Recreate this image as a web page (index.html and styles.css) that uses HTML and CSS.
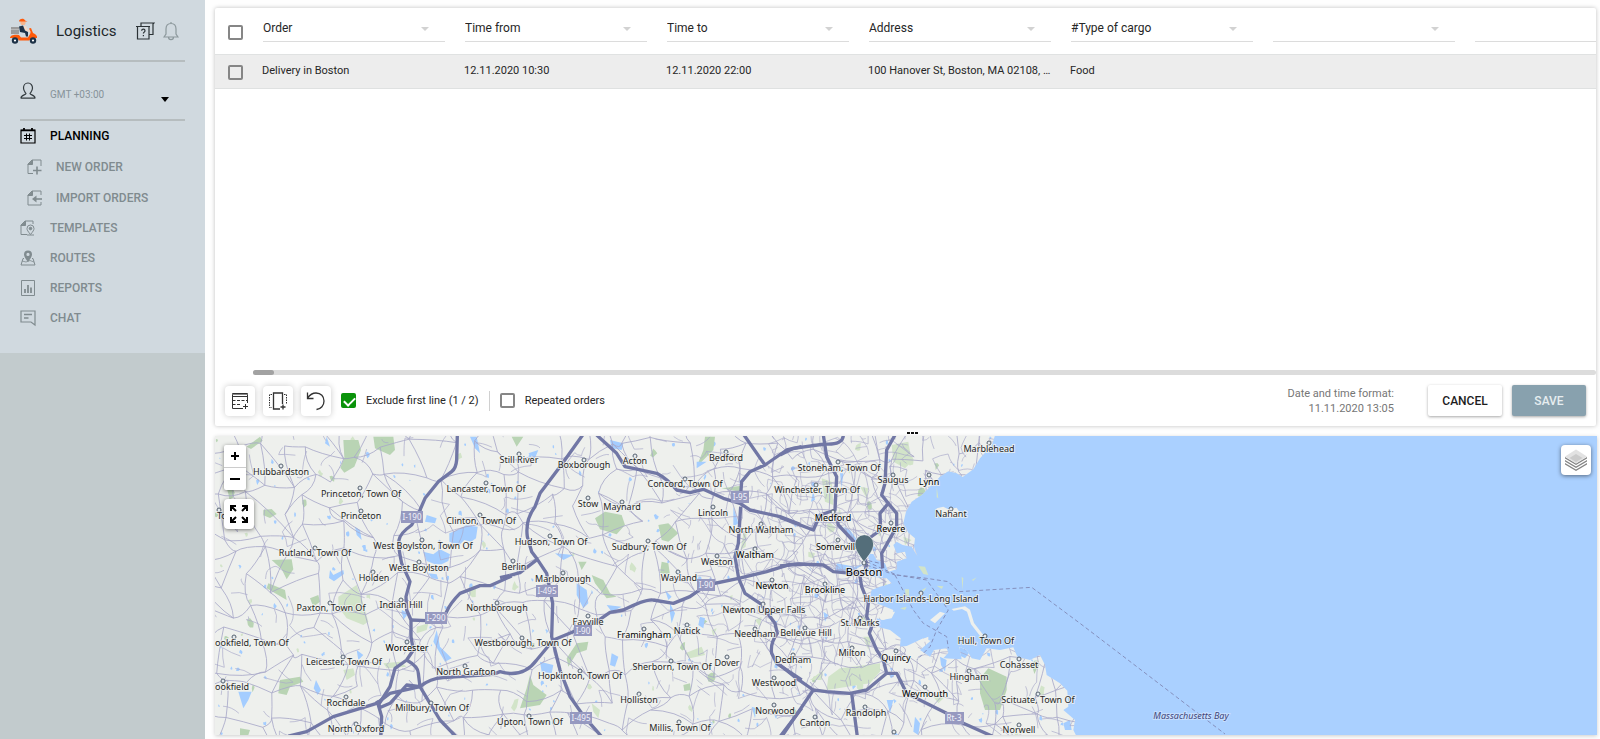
FILE: index.html
```html
<!DOCTYPE html>
<html lang="en">
<head>
<meta charset="utf-8">
<title>Logistics</title>
<link rel="stylesheet" href="styles.css">
</head>
<body>
<div class="app">
  <aside class="sidebar">
    <div class="sidebar-top">
      <header class="brand">
        <svg class="logo" viewBox="0 0 28 27" aria-hidden="true">
          <rect x="1" y="9" width="8" height="7" fill="#9b9b9b"/>
          <path d="M1 11.500h8" stroke="#b9b9b9"/>
          <path d="M13 8l3 0 1.500 3 3.500 2-1 1.500-4.500-1.500z" fill="#f3d9c6"/>
          <path d="M9 8.500l4-1 2 5 3 1.500 0 4.500-2 0-1-3.500-5-1z" fill="#1d3247"/>
          <circle cx="13" cy="4.500" r="2.600" fill="#f5b58e"/>
          <path d="M9 3.500C9 0 14.500 0 15 2.500l2.500 1H9z" fill="#ff5a0a"/>
          <path d="M0 20c0-3 5-4 9-3l2 2.500h7c1-2 3-4 2.500-6l-1.500-3 2-.500 2 5c3 1 4.500 3 4 5h-5l-3 2.500H9L7 20z" fill="#ff5a0a"/>
          <circle cx="5" cy="22.500" r="3.200" fill="#1d3247"/><circle cx="5" cy="22.500" r="1.100" fill="#fff"/>
          <circle cx="23" cy="22.500" r="3.200" fill="#1d3247"/><circle cx="23" cy="22.500" r="1.100" fill="#fff"/>
        </svg>
        <h1 class="brand-name">Logistics</h1>
        <button class="icon-button" type="button" aria-label="Help">
          <svg width="20" height="20" viewBox="0 0 20 20" fill="none" stroke="#2b3236" stroke-width="1.200">
            <path d="M1 5.500h14M2.500 5.500v12.500h11.500V5.500M6 5.500V2h13l-1 1v10.500h-4"/>
            <path d="M6.700 9.800c0-2.200 3.300-2.200 3.300 0 0 1.400-1.600 1.300-1.600 2.700M8.400 14v1.200"/>
          </svg>
        </button>
        <button class="icon-button" type="button" aria-label="Notifications">
          <svg width="16" height="20" viewBox="0 0 16 20" fill="none" stroke="#8c989c" stroke-width="1.200">
            <path d="M8 2.500c-3.500 0-5 2.500-5 5.500v5l-2 3h14l-2-3V8c0-3-1.500-5.500-5-5.500zM8 2.500V1M5.500 16c0 3.500 5 3.500 5 0"/>
          </svg>
        </button>
      </header>
      <div class="account">
        <svg width="16" height="18" viewBox="0 0 16 18" fill="none" stroke="#343c40" stroke-width="1.200">
          <path d="M8 1C5 1 3.500 3.500 3.500 6c0 3 1.500 4 2.500 5.500C6 13 1 13 1 16h14c0-3-5-3-5-4.500C11 10 12.500 9 12.500 6 12.500 3.500 11 1 8 1zM1 16.200h14"/>
        </svg>
        <label class="zone-label" for="zone">GMT +03:00</label>
        <button class="zone-toggle" id="zone" type="button"></button>
      </div>
      <nav class="menu">
        <a class="item current" href="#planning">
          <svg width="16" height="18" viewBox="0 0 16 18" fill="none" stroke="currentColor">
            <path d="M1 3h14v13H1z" stroke-width="1.200"/><path d="M1 3.500h14" stroke-width="1.500"/><path d="M4 1v3M12 1v3" stroke-width="1.800"/>
            <path d="M6.500 6.500v7M9.500 6.500v7M4 8.500h8M4 11.500h8"/>
          </svg>
          <span>PLANNING</span></a>
        <a class="item sub" href="#new">
          <svg width="16" height="18" viewBox="0 0 16 18" fill="none" stroke="currentColor">
            <path d="M6 15.500H1V6l4-4h9v5M14 7v1" /><path d="M1 6.500h4.500V2z" fill="currentColor"/><path d="M10 8.500v8M6 12.500h8.500" stroke-width="1.600"/>
          </svg>
          <span>NEW ORDER</span></a>
        <a class="item sub" href="#import">
          <svg width="16" height="18" viewBox="0 0 16 18" fill="none" stroke="currentColor">
            <path d="M14 13v3H1V6l4-4h9v4"/><path d="M1 6.500h4.500V2z" fill="currentColor"/><path d="M15 10H8" stroke-width="1.600"/><path d="M9.500 6.500v7L5 10z" fill="currentColor" stroke="none"/>
          </svg>
          <span>IMPORT ORDERS</span></a>
        <a class="item" href="#templates">
          <svg width="16" height="18" viewBox="0 0 16 18" fill="none" stroke="currentColor">
            <path d="M7 15.500H1V6l4-4h8v3"/><path d="M1 6.500h4.500V2z" fill="currentColor"/><path d="M10.500 15.500C8 12.500 7 11 7 9.500a3.500 3.500 0 0 1 7 0c0 1.500-1 3-3.500 6zM7 16h7"/><circle cx="10.500" cy="9.500" r="1.300" fill="currentColor"/>
          </svg>
          <span>TEMPLATES</span></a>
        <a class="item" href="#routes">
          <svg width="16" height="18" viewBox="0 0 16 18" fill="none" stroke="currentColor">
            <path d="M4 9.500H3L1 16h14l-2-6.500h-1"/><path d="M2 12l4 1 4-1.500 4 1.500" stroke-width=".800"/>
            <path d="M8 13C5.500 9.500 4 7.500 4 5.500a4 4 0 0 1 8 0c0 2-1.500 4-4 7.500zM8 3.800a1.600 1.600 0 1 0 0 3.200 1.600 1.600 0 0 0 0-3.200z" fill="currentColor" fill-rule="evenodd" stroke="none"/>
          </svg>
          <span>ROUTES</span></a>
        <a class="item" href="#reports">
          <svg width="16" height="18" viewBox="0 0 16 18" fill="none" stroke="currentColor">
            <path d="M1.500 1.500h13v15h-13z"/><path d="M5 10v4M8 6v8M11 8.500V14" stroke-width="1.800"/>
          </svg>
          <span>REPORTS</span></a>
        <a class="item" href="#chat">
          <svg width="16" height="18" viewBox="0 0 16 18" fill="none" stroke="currentColor" stroke-width="1.200">
            <path d="M1 2h14v14l-4-3H1z"/><path d="M4 5.500h8M4 9h4.500" stroke-width="1.400"/>
          </svg>
          <span>CHAT</span></a>
      </nav>
    </div>
  </aside>

  <main class="main">
    <section class="panel">
      <div class="table-wrap">
        <table class="orders">
          <colgroup><col class="col-check"><col><col><col><col><col><col><col></colgroup>
          <thead>
            <tr>
              <th><input type="checkbox" class="check" aria-label="Select all"></th>
              <th><div class="field"><select aria-label="Column 1"><option>Order</option></select></div></th>
              <th><div class="field"><select aria-label="Column 2"><option>Time from</option></select></div></th>
              <th><div class="field"><select aria-label="Column 3"><option>Time to</option></select></div></th>
              <th><div class="field"><select aria-label="Column 4"><option>Address</option></select></div></th>
              <th><div class="field"><select aria-label="Column 5"><option>#Type of cargo</option></select></div></th>
              <th><div class="field"><select aria-label="Column 6"><option></option></select></div></th>
              <th><div class="field"><select aria-label="Column 7"><option></option></select></div></th>
            </tr>
          </thead>
          <tbody>
            <tr>
              <td><input type="checkbox" class="check" aria-label="Select order"></td>
              <td>Delivery in Boston</td>
              <td>12.11.2020 10:30</td>
              <td>12.11.2020 22:00</td>
              <td>100 Hanover St, Boston, MA 02108, …</td>
              <td>Food</td>
              <td></td>
              <td></td>
            </tr>
          </tbody>
        </table>
      </div>
      <div class="scroll-track"><div class="scroll-thumb"></div></div>
      <div class="toolbar">
        <div class="tools">
          <button class="tool" type="button" aria-label="Add row">
            <svg width="18" height="18" viewBox="0 0 18 18" fill="none" stroke="#333">
              <path d="M16.500 11V1.500h-15v15H12M1.500 4.500h15"/><path d="M1.500 2.500h15" stroke="#888"/><path d="M1.500 8.500h15M1.500 12.500h9" stroke-dasharray="3 1.500"/><path d="M14.500 12v5M12 14.500h5"/>
            </svg>
          </button>
          <button class="tool" type="button" aria-label="Add column">
            <svg width="20" height="20" viewBox="0 0 20 20" fill="none" stroke="#333">
              <path d="M14.500 13V2h-9v16H12" stroke-width="1.300"/><path d="M4 3.500H1.500v13H4M16 3.500h2.500v10" stroke-dasharray="1.500 1"/><path d="M15 13.500v5M12.500 16h5" stroke-width="1.300"/>
            </svg>
          </button>
          <button class="tool" type="button" aria-label="Undo">
            <svg width="20" height="20" viewBox="0 0 20 20" fill="none" stroke="#333" stroke-width="1.300">
              <path d="M1.500 1.500v6h6M1.500 7C4 3.500 7 2 10 2c5 0 8 3.500 8 8s-3 8-7.500 8.500"/>
            </svg>
          </button>
        </div>
        <label class="option"><input type="checkbox" class="check" checked>Exclude first line (1 / 2)</label>
        <span class="divider"></span>
        <label class="option"><input type="checkbox" class="check">Repeated orders</label>
        <p class="format">Date and time format:<br>11.11.2020 13:05</p>
        <button class="action" type="button">CANCEL</button>
        <button class="action save" type="button">SAVE</button>
      </div>
    </section>

    <div class="splitter" role="separator"><i></i><i></i><i></i></div>

    <section class="map">
      <svg class="map-canvas" viewBox="0 0 1382 299" preserveAspectRatio="xMinYMid slice" role="img" aria-label="Map of Boston area">
        <defs>
          <clipPath id="land">
            <path transform="translate(565 -6) scale(.33333)" d="M-1800 0H650L636 45 600 85 580 118 548 141 530 130 505 124 480 140 450 170 425 195 395 215 378 245 370 280 385 308 405 325 402 350 412 378 395 350 368 345 350 335 340 345 350 370 375 365 380 385 350 395 350 418 325 425 315 400 290 390 280 372 262 372 270 400 262 425 275 440 320 445 335 460 300 470 275 480 268 505 290 520 340 540 335 560 310 570 290 565 292 590 330 600 362 625 360 650 380 648 430 625 452 632 420 660 450 680 462 660 500 655 505 668 490 685 545 688 538 650 560 660 575 685 600 690 620 655 660 660 700 652 712 680 750 690 780 675 795 705 800 735 840 760 862 782 865 830 850 840 885 870 880 900 895 930H-1800z"/>
          </clipPath>
        </defs>
        <rect width="1382" height="299" fill="#aad0ff"/>
        <g clip-path="url(#land)">
          <rect width="900" height="299" fill="#eef0ed"/>
          <g id="terrain"></g>
          <g transform="translate(-5 -6) scale(.33333)">
            <path class="wood" d="M400 30l45 0 8 30-20 50-30 18-12-15 12-30zM490 20h60l5 40-15 15-45-20zM110 50l40-30 8 12-35 25zM160 240l25-3 15 15-20 12-20-8zM185 390l60-2 5 30-20 30-15-30zM175 460l50 20 5 30-60-35zM300 505l25-10 5 20-20 15zM210 750l60-10 10 15-40 15-10 25-25-5zM90 895l30 5-5 15H90z"/>
            <path class="park" d="M385 500l55-35 15 40 20 70-15 10-50-20-25-35zM400 720l30-5 5 20-25 15zM520 700l50 -5 20 15-60 5zM620 590l35-10-5 20-30 10z"/>
            <path class="water" d="M718 310l30-12 20-12 35 4-5 35-15 10-20-5-15 15-30-10zM640 365l30 8 20-15 30 15-5 20-20 10-20 0-25-10zM655 430l25 3 5 15-20-3zM85 785l40 0-10 25-15 25zM360 420l10 15 30-15 2 12-30 22-15-10zM318 750l15 30-10 15-12-20zM680 600l10 50 35 35-20 10-35-60zM435 290l15 10 5 30-15-15zM650 255l30 10-5 15-30-5zM350 20l10 30-15-10zM575 540l20 10-15 20zM440 660l20 15-15 15zM780 20h20l10 50-15-15z"/>
          </g>
          <g transform="translate(285 -6) scale(.33333)">
            <path class="wood" d="M285 265l30-20 50 10 10 30-25 28-50-15zM275 435l35 15 20 40 20 10-30 5-35-45zM475 285l30-5 30 30-30 25-20-5zM485 395l20 5 5 35-30-5zM230 640l35-5-5 25-30 10-25 40-5-25zM90 735l10 30 40 30-20 30-60 10 20-60zM550 765l20-5 3 20-20 3zM615 20h30l-5 40-50 50 20-50zM665 175l60-8v20zM35 20h35l-20 30zM235 395l25 0-15 25z"/>
            <path class="park" d="M555 670l50-20 10 25-45 10zM275 820l25 20-5 25-15-20zM765 570l20-10-5 30zM730 310l10-10-3 50-15 10zM635 600l15-5-10 25z"/>
            <path class="water" d="M120 695l40 10-5 25-30-5zM230 460l30 20 5 40-15 15-20-40zM510 520l15 30-10 30-5-30zM165 370l55 5-30 15zM590 95l30 0-30 20zM85 70l30-10-10 25zM330 30l40 10-5 20-30-5zM600 560l15 5-5 30-15-10zM700 230l15 50-15 10zM335 670l20 10-10 30-15-5zM755 830l15 5-5 30zM495 480l20 20-10 10zM320 525l45 5-30 15z"/>
          </g>
          <g transform="translate(565 -6) scale(.33333)">
            <path class="wood" d="M600 745l25-30 55 25 0 40-20 60-45 0-15-50z"/>
            <path class="park" d="M335 45l50-10 10 60-20 20-35-20zM125 145l30 10 5 70-25-10zM90 750l40-30-5 30zM180 715l120-15 0 25-30 35-130 20 5-40zM85 365l20 5-5 15-15-5zM240 170l25 5-5 30zM370 320l25 10-20 15zM460 800l35 0-20 20zM250 620l25 0-10 40z"/>
            <path class="water" d="M170 400l55 10 30-10-30 20-60 5zM190 290l20 10 25 35-10 5zM180 130l10 0-5 45zM320 810l20 0-10 40zM405 860l15 20-5 35-15-10zM480 680l20 10-5 35-12-20zM130 545l15 10-10 20zM540 650l30 15-15 20-20-10zM100 180l5 30-12 5zM850 880l20-10 5 30-20 0z"/>
          </g>
          <g id="roads" fill="none" stroke="#a9a9c9" stroke-opacity=".85"></g>
        </g>
        <g transform="translate(565 -6) scale(.33333)">
          <path class="shore" d="M470 235l20-5 15 8 25-5 15 25-25 5-25-10-25 2zM515 537l40-8 15 10 12 40 28 36-8 5-29-37-12-38-15-8-25 5zM450 570l30-25 15 5-30 30zM320 545l25 0-10 20-30 5-15-15zM415 632l30-12 0 10-25 12zM395 655l20-4-8 10z"/>
          <path class="park" d="M415 408l20 2 10 25-15-3zM375 478l12 0 0 20-10 0zM425 480l15-8-8 12zM470 467l20 2-5 8zM545 440l5 5-3 35zM360 535l20-5-5 10zM470 170l5 35-5-3zM575 450l15-8-10 10z"/>
          <path class="ferry" d="M260 395L350 435 440 445 505 455 535 485 755 472 900 580 1335 912M345 435L400 540 430 580 500 620 505 655M350 435L440 450 505 540 470 600 450 650 410 690M260 405L345 435M265 392L300 400"/>
        </g>
        <g class="highways">
          <g transform="translate(-5 -6) scale(.33333)">
            <path d="M742 15L740 90Q738 115 725 125L685 155 645 205 630 240 605 285Q570 310 567 330T575 400L600 455 588 500 590 540 603 570V620L610 660 590 690 555 715 540 770 505 825 515 860 512 920"/>
            <path d="M603 570L650 572Q700 570 710 545T750 490L810 467 840 467 905 438"/>
            <path d="M590 690Q625 710 625 730L630 770 660 820 690 870 738 920M235 918L290 905 370 860 500 820 540 790 630 770Q660 745 700 743L850 733M505 835L540 820 590 765 630 770"/>
            <path d="M500 812l10 20" stroke-width="20"/>
          </g>
          <g transform="translate(285 -6) scale(.33333)">
            <path d="M30 436L60 428 112 388M-20 733L0 725Q70 745 110 690L160 630 220 605 290 575 330 547 370 540Q440 505 460 510L520 520 570 500 620 465 716 445 800 425 870 403 900 403"/>
            <path d="M30 436L0 443"/>
            <path d="M248 15L180 110 120 190 105 230Q75 270 82 320L95 365 112 388 140 430 158 520 155 620 180 720 210 800 245 850 270 880 305 920"/>
            <path d="M290 15L350 70 375 110 470 130Q500 145 530 180L570 188 610 178 670 205 720 220 750 240 840 260 900 283M720 220L725 155 750 125 795 105 860 60 905 50M732 15L795 105M722 230L715 340 705 380 716 445 735 490 780 520 825 580 832 610Q810 640 815 670L830 700 905 750M840 920L905 835"/>
          </g>
          <g transform="translate(565 -6) scale(.33333)">
            <path d="M0 75L40 55 135 42Q190 45 190 15M130 15L140 80 170 140 165 240 120 255 100 300 0 262M168 250L175 285 245 360 260 400M345 15L320 60 315 160 305 195 325 220 300 250 302 300 260 330M325 220L350 250 350 290 305 370 308 415"/>
            <path d="M0 408L60 402 130 405 160 425 215 430 255 425 260 400M255 425L240 440 245 470 265 520 260 560 275 590 268 610 290 660 310 690 320 730M0 705L50 745 100 780 140 785 210 790 260 780 320 730 350 730 380 790 430 815 500 850 550 880 640 920M215 790L232 920M100 780L5 920"/>
          </g>
        </g>
        <g class="towns">
          <circle cx="66" cy="30" r="2"/><circle cx="145" cy="52" r="2"/><circle cx="146" cy="75" r="2"/><circle cx="271" cy="47" r="2"/><circle cx="265" cy="79" r="2"/><circle cx="4" cy="74" r="2"/><circle cx="207" cy="104" r="2"/><circle cx="204" cy="126" r="2"/><circle cx="100" cy="112" r="2"/><circle cx="158" cy="136" r="2"/><circle cx="115" cy="167" r="2"/><circle cx="186" cy="164" r="2"/><circle cx="19" cy="201" r="2"/><circle cx="192" cy="206" r="2"/><circle cx="128" cy="221" r="2"/><circle cx="250" cy="230" r="2"/><circle cx="8" cy="245" r="2"/><circle cx="131" cy="261" r="2"/><circle cx="216" cy="267" r="2"/><circle cx="141" cy="288" r="2"/><circle cx="282" cy="167" r="2"/><circle cx="307" cy="202" r="2"/><circle cx="304" cy="18" r="2"/><circle cx="298" cy="125" r="2"/><circle cx="314" cy="280" r="2"/>
          <circle cx="369" cy="24" r="2"/><circle cx="420" cy="20" r="2"/><circle cx="470" cy="43" r="2"/><circle cx="511" cy="16" r="2"/><circle cx="373" cy="62" r="2"/><circle cx="407" cy="66" r="2"/><circle cx="498" cy="71" r="2"/><circle cx="546" cy="88" r="2"/><circle cx="335" cy="100" r="2"/><circle cx="433" cy="105" r="2"/><circle cx="502" cy="120" r="2"/><circle cx="540" cy="113" r="2"/><circle cx="348" cy="137" r="2"/><circle cx="463" cy="136" r="2"/><circle cx="557" cy="144" r="2"/><circle cx="548" cy="168" r="2"/><circle cx="373" cy="180" r="2"/><circle cx="429" cy="193" r="2"/><circle cx="472" cy="189" r="2"/><circle cx="540" cy="193" r="2"/><circle cx="590" cy="192" r="2"/><circle cx="456" cy="225" r="2"/><circle cx="512" cy="221" r="2"/><circle cx="365" cy="235" r="2"/><circle cx="578" cy="219" r="2"/><circle cx="559" cy="242" r="2"/><circle cx="424" cy="258" r="2"/><circle cx="559" cy="269" r="2"/><circle cx="464" cy="286" r="2"/>
          <circle cx="774" cy="7" r="2"/><circle cx="623" cy="26" r="2"/><circle cx="601" cy="49" r="2"/><circle cx="678" cy="39" r="2"/><circle cx="714" cy="39" r="2"/><circle cx="736" cy="73" r="2"/><circle cx="618" cy="76" r="2"/><circle cx="676" cy="87" r="2"/><circle cx="623" cy="104" r="2"/><circle cx="649" cy="127" r="2"/><circle cx="610" cy="148" r="2"/><circle cx="706" cy="157" r="2"/><circle cx="645" cy="182" r="2"/><circle cx="770" cy="200" r="2"/><circle cx="637" cy="212" r="2"/><circle cx="681" cy="215" r="2"/><circle cx="804" cy="223" r="2"/><circle cx="754" cy="235" r="2"/><circle cx="710" cy="251" r="2"/><circle cx="823" cy="258" r="2"/><circle cx="650" cy="271" r="2"/><circle cx="600" cy="281" r="2"/><circle cx="804" cy="289" r="2"/><circle cx="679" cy="296" r="2"/>
        </g>
        <g class="places">
          <text x="66" y="39">Hubbardston</text><text x="146" y="61">Princeton, Town Of</text><text x="146" y="83">Princeton</text><text x="271" y="56">Lancaster, Town Of</text><text x="266" y="88">Clinton, Town Of</text><text class="edge" x="2" y="83">Town</text><text x="208" y="113">West Boylston, Town Of</text><text x="204" y="135">West Boylston</text><text x="100" y="120">Rutland, Town Of</text><text x="159" y="145">Holden</text><text x="116" y="175">Paxton, Town Of</text><text x="186" y="172">Indian Hill</text><text class="edge" x="0" y="210">ookfield, Town Of</text><text class="city" x="192" y="215">Worcester</text><text x="129" y="229">Leicester, Town Of</text><text x="251" y="239">North Grafton</text><text class="edge" x="0" y="254">ookfield</text><text x="131" y="270">Rochdale</text><text x="217" y="275">Millbury, Town Of</text><text x="141" y="296">North Oxford</text><text x="282" y="175">Northborough</text><text x="308" y="210">Westborough, Town Of</text><text x="304" y="27">Still River</text><text x="299" y="134">Berlin</text><text x="315" y="289">Upton, Town Of</text>
          <text x="369" y="32">Boxborough</text><text x="420" y="28">Acton</text><text x="470" y="51">Concord, Town Of</text><text x="511" y="25">Bedford</text><text x="373" y="71">Stow</text><text x="407" y="74">Maynard</text><text x="498" y="80">Lincoln</text><text x="546" y="97">North Waltham</text><text x="336" y="109">Hudson, Town Of</text><text x="434" y="114">Sudbury, Town Of</text><text x="502" y="129">Weston</text><text class="city" x="540" y="122">Waltham</text><text x="348" y="146">Marlborough</text><text x="464" y="145">Wayland</text><text class="city" x="557" y="153">Newton</text><text x="549" y="177">Newton Upper Falls</text><text x="373" y="189">Fayville</text><text class="city" x="429" y="202">Framingham</text><text x="472" y="198">Natick</text><text x="540" y="201">Needham</text><text x="591" y="200">Bellevue Hill</text><text x="457" y="234">Sherborn, Town Of</text><text x="512" y="230">Dover</text><text x="365" y="243">Hopkinton, Town Of</text><text x="578" y="227">Dedham</text><text x="559" y="250">Westwood</text><text x="424" y="267">Holliston</text><text x="560" y="278">Norwood</text><text x="465" y="295">Millis, Town Of</text>
          <text x="774" y="16">Marblehead</text><text x="624" y="35">Stoneham, Town Of</text><text x="602" y="57">Winchester, Town Of</text><text x="678" y="47">Saugus</text><text class="city" x="714" y="49">Lynn</text><text x="736" y="81">Nahant</text><text class="city" x="618" y="85">Medford</text><text class="city" x="676" y="96">Revere</text><text class="city" x="623" y="114">Somerville</text><text class="city capital" x="649" y="140">Boston</text><text class="city" x="610" y="157">Brookline</text><text x="706" y="166">Harbor Islands-Long Island</text><text x="645" y="190">St. Marks</text><text x="771" y="208">Hull, Town Of</text><text x="637" y="220">Milton</text><text class="city" x="681" y="225">Quincy</text><text x="804" y="232">Cohasset</text><text x="754" y="244">Hingham</text><text class="city" x="710" y="261">Weymouth</text><text x="823" y="267">Scituate, Town Of</text><text x="651" y="280">Randolph</text><text x="600" y="290">Canton</text><text x="804" y="297">Norwell</text><text class="bay" x="976" y="283">Massachusetts Bay</text>
        </g>
        <g class="shields">
          <rect x="186" y="75" width="22" height="12"/><text x="197" y="84">I-190</text>
          <rect x="210" y="176" width="22" height="12"/><text x="221" y="185">I-290</text>
          <rect x="516" y="55" width="18" height="12"/><text x="525" y="64">I-95</text>
          <rect x="482" y="143" width="18" height="12"/><text x="491" y="152">I-90</text>
          <rect x="321" y="149" width="22" height="12"/><text x="332" y="158">I-495</text>
          <rect x="359" y="189" width="18" height="11"/><text x="368" y="198">I-90</text>
          <rect x="355" y="276" width="22" height="12"/><text x="366" y="285">I-495</text>
          <rect x="730" y="276" width="19" height="12"/><text x="739" y="285">Rt-3</text>
        </g>
        <path d="M649 126C644 119 640 114 640 108a9.300 9.300 0 0 1 18.600 0c0 6-4.600 11-9.600 18z" fill="#546e7a" stroke="#fff" stroke-width=".600"/>
      </svg>
      <div class="map-left">
        <div class="zoom">
          <button type="button" aria-label="Zoom in"><svg width="10" height="10" viewBox="0 0 10 10" stroke="#000" stroke-width="2"><path d="M5 1v8M1 5h8"/></svg></button>
          <button type="button" aria-label="Zoom out"><svg width="10" height="10" viewBox="0 0 10 10" stroke="#000" stroke-width="2"><path d="M0 5h10"/></svg></button>
        </div>
        <button class="expand" type="button" aria-label="Full screen">
          <svg width="20" height="20" viewBox="0 0 20 20" fill="none" stroke="#000" stroke-width="2">
            <path d="M2 7V2h5M2 2l5 5M13 2h5v5M18 2l-5 5M2 13v5h5M2 18l5-5M18 13v5h-5M18 18l-5-5"/>
          </svg>
        </button>
      </div>
      <button class="layers" type="button" aria-label="Layers">
        <svg width="24" height="24" viewBox="0 0 24 24">
          <path d="M1 15l11 6.500L23 15v1.500L12 23 1 16.500z" fill="#858585"/>
          <path d="M1 12l11 6.500L23 12v1.500L12 20 1 13.500z" fill="#858585"/>
          <path d="M1 9l11 6.500L23 9v1.500L12 17 1 10.500z" fill="#858585"/>
          <path d="M12 1.500L23 8.500 12 15.500 1 8.500z" fill="#e2e2e2"/><path d="M12 6l6.500 4L12 14 5.500 10z" fill="#cbcbcb"/>
        </svg>
      </button>
    </section>
  </main>
</div>
<script src="map.js"></script>
</body>
</html>
```
FILE: styles.css
```css
* { box-sizing: border-box; }
body { margin: 0; background: #fefefe; color: #262626; font: 11px/16px Roboto, "Liberation Sans", sans-serif; }
button { margin: 0; padding: 0; border: 0; background: none; font: inherit; color: inherit; cursor: pointer; }
svg { display: block; flex: none; }

.app { display: flex; height: 100vh; }

.sidebar { flex: 0 0 205px; background: #c2cbcd; }
.sidebar-top { height: 353px; background: #d0d9df; }
.brand { position: relative; display: flex; align-items: center; height: 62px; padding: 0 26px 0 10px; }
.brand::after { content: ""; position: absolute; left: 20px; right: 20px; bottom: 0; border-bottom: 2px solid #b6bdbf; }
.logo { width: 28px; height: 27px; }
.brand-name { margin: 0 auto 0 18px; font-size: 15px; line-height: 20px; font-weight: 400; color: #20272a; }
.icon-button { margin-left: 8px; }
.account { display: flex; align-items: center; height: 59px; margin: 0 20px; border-bottom: 2px solid #b6bdbf; }
.zone-label { margin: 8px auto 0 14px; font-size: 10px; color: #87939a; }
.zone-toggle { margin: 18px 16px 0 0; border: 4px solid transparent; border-top: 5px solid #000; border-bottom: 0; }
.menu { display: flex; flex-direction: column; }
.item { display: flex; align-items: center; gap: 14px; height: 30px; padding-left: 20px; color: #808b8f; font-size: 12px; font-weight: 500; text-decoration: none; }
.item.sub { height: 31px; padding-left: 27px; gap: 13px; }
.item.current { color: #000; }

.main { display: flex; flex: 1; flex-direction: column; min-width: 0; padding: 8px 3px 4px 10px; }
.panel { display: flex; flex: 418 1 0; flex-direction: column; margin-right: 1px; background: #fff; border-radius: 2px; box-shadow: 0 0 4px rgba(0, 0, 0, .25); }
.table-wrap { flex: 1; overflow: hidden; }
.orders { width: 1452px; table-layout: fixed; border-collapse: collapse; }
.col-check { width: 38px; }
.orders th { height: 46px; padding: 0 10px; text-align: left; font-weight: 400; vertical-align: middle; }
.orders td { height: 34px; padding: 0 9px; overflow: hidden; text-overflow: ellipsis; white-space: nowrap; border-top: 1px solid #e0e2e2; border-bottom: 1px solid #dfe1e1; background: #ededed; }
.orders th:first-child, .orders td:first-child { padding: 2px 0 0 13px; }
.orders th:first-child { padding-top: 4px; }
.field { position: relative; height: 26px; margin-bottom: 4px; border-bottom: 1px solid #dcdcdc; }
.field::after { content: ""; position: absolute; right: 16px; top: 11px; border: 4px solid transparent; border-top-color: #d2d2d2; border-bottom: 0; }
.field select { width: 100%; height: 24px; padding: 0; border: 0; background: none; appearance: none; color: #262626; font: 12px/24px Roboto, sans-serif; }

.check { appearance: none; display: block; flex: none; width: 15px; height: 15px; margin: 0; border: 2px solid #868686; border-radius: 2px; }
.check:checked { position: relative; border-color: #0a930a; background: #0a930a; }
.check:checked::after { content: ""; position: absolute; left: 3px; top: 0; width: 5px; height: 9px; border: solid #fff; border-width: 0 2px 2px 0; transform: rotate(45deg); }

.scroll-track { height: 5px; margin-left: 38px; border-radius: 3px; background: #dcdcdc; }
.scroll-thumb { width: 21px; height: 5px; border-radius: 3px; background: #a2a2a2; }

.toolbar { display: flex; align-items: center; gap: 10px; height: 51px; padding: 0 10px; }
.tools { display: flex; gap: 8px; }
.tool { display: grid; place-items: center; width: 30px; height: 30px; border-radius: 4px; background: #fff; box-shadow: 0 0 6px rgba(0, 0, 0, .22); }
.option { display: flex; align-items: center; gap: 10px; }
.divider { width: 1px; height: 20px; background: #d0d0d0; }
.format { margin: 0 24px 0 auto; color: #767676; line-height: 15px; text-align: right; }
.action { width: 74px; height: 31px; border-radius: 2px; background: #fff; box-shadow: 0 1px 3px rgba(0, 0, 0, .35); color: #1d1d1d; font-size: 12px; font-weight: 500; }
.save { background: #88a1ae; color: #e6edf0; }

.splitter { display: flex; align-items: flex-end; justify-content: center; gap: 1px; height: 10px; padding: 0 0 2px 12px; }
.splitter i { width: 3px; height: 2px; background: #111; }

.map { position: relative; flex: 299 1 0; min-height: 0; overflow: hidden; background: #aad0ff; box-shadow: 0 1px 4px rgba(0, 0, 0, .2); }
.map-canvas { width: 100%; height: 100%; }
.wood { fill: #b9d4b4; }
.park { fill: #d2e4c9; }
.water { fill: #a4cdff; }
.shore { fill: #eef0ed; }
.ferry { fill: none; stroke: #8590bd; stroke-width: 3; stroke-dasharray: 12 8; }
.highways path { fill: none; stroke: #7177a5; stroke-width: 10; stroke-linejoin: round; }
.towns circle { fill: #e6eaee; stroke: #556270; stroke-width: 1; }
.places text { fill: #262626; font: 9px "Noto Sans", sans-serif; text-anchor: middle; paint-order: stroke; stroke: #f2f4f1; stroke-width: 2px; stroke-opacity: .75; }
.places .edge { text-anchor: start; }
.places .city { fill: #000; }
.places .capital { font-size: 11px; }
.places .bay { fill: #3f4578; stroke: #cfe3ff; font-style: italic; }
.shields rect { fill: #9699c0; }
.shields text { fill: #f3f3fa; font: 8px "Noto Sans", sans-serif; text-anchor: middle; }

.map-left { position: absolute; left: 9px; top: 9px; display: flex; flex-direction: column; align-items: flex-start; gap: 9px; }
.zoom { border-radius: 2px; background: #fff; box-shadow: 0 1px 4px rgba(0, 0, 0, .5); }
.zoom button { display: grid; place-items: center; width: 22px; height: 22px; }
.zoom button + button { height: 23px; border-top: 1px solid #ccc; }
.expand, .layers { display: grid; place-items: center; width: 30px; height: 30px; border-radius: 4px; background: #fff; box-shadow: 0 1px 4px rgba(0, 0, 0, .5); }
.layers { position: absolute; right: 6px; top: 9px; }
```
FILE: map.js
```js
// Draws the local road mesh, ponds and groves under the highways.
const NS = "http://www.w3.org/2000/svg";
let seed = 7;
const rnd = () => (seed = (seed * 16807) % 2147483647) / 2147483647;
const near = (x, y, cx, cy, r) => Math.exp(-((x - cx) ** 2 + (y - cy) ** 2) / (2 * r * r));
const boston = (x, y) => near(x, y, 635, 130, 75);

function add(parent, d, attrs) {
  const path = document.createElementNS(NS, "path");
  path.setAttribute("d", d);
  for (const key in attrs) path.setAttribute(key, attrs[key]);
  document.getElementById(parent).append(path);
}

function mesh(step, keep, width) {
  const cols = Math.ceil(880 / step) + 2;
  const rows = Math.ceil(310 / step) + 2;
  const at = [];
  for (let j = 0; j < rows; j++) {
    at.push([]);
    for (let i = 0; i < cols; i++) {
      at[j].push([(i - 0.5 + (rnd() - 0.5) * 0.9) * step, (j - 0.5 + (rnd() - 0.5) * 0.9) * step]);
    }
  }
  let d = "";
  const link = (a, b) => {
    if (rnd() > keep(a[0], a[1])) return;
    const mx = (a[0] + b[0]) / 2 + (rnd() - 0.5) * step * 0.5;
    const my = (a[1] + b[1]) / 2 + (rnd() - 0.5) * step * 0.5;
    d += `M${a[0].toFixed(1)} ${a[1].toFixed(1)}Q${mx.toFixed(1)} ${my.toFixed(1)} ${b[0].toFixed(1)} ${b[1].toFixed(1)}`;
  };
  for (let j = 0; j < rows - 1; j++) {
    for (let i = 0; i < cols - 1; i++) {
      link(at[j][i], at[j][i + 1]);
      link(at[j][i], at[j + 1][i]);
      if (rnd() < 0.25) link(at[j][i], at[j + 1][i + 1]);
    }
  }
  add("roads", d, { "stroke-width": width });
}

mesh(27, () => 0.85, 1);
mesh(14, (x, y) => 0.13 + 0.5 * boston(x, y) + 0.4 * near(x, y, 195, 210, 35) + (x > 480 ? 0.12 : 0), 0.8);
mesh(8, (x, y) => 0.75 * boston(x, y), 0.7);

function blobs(count, cls, size) {
  let d = "";
  for (let n = 0; n < count; n++) {
    const x = rnd() * 870;
    const y = rnd() * 299;
    const r = size * (0.4 + rnd());
    for (let k = 0; k < 7; k++) {
      const a = (k / 7) * Math.PI * 2;
      const q = r * (0.4 + rnd() * 0.8);
      d += `${k ? "L" : "M"}${(x + Math.cos(a) * q * 0.8).toFixed(1)} ${(y + Math.sin(a) * q * 1.2).toFixed(1)}`;
    }
    d += "z";
  }
  add("terrain", d, { class: cls });
}

blobs(45, "park", 4);
blobs(25, "wood", 4);
blobs(260, "water", 2);
```
